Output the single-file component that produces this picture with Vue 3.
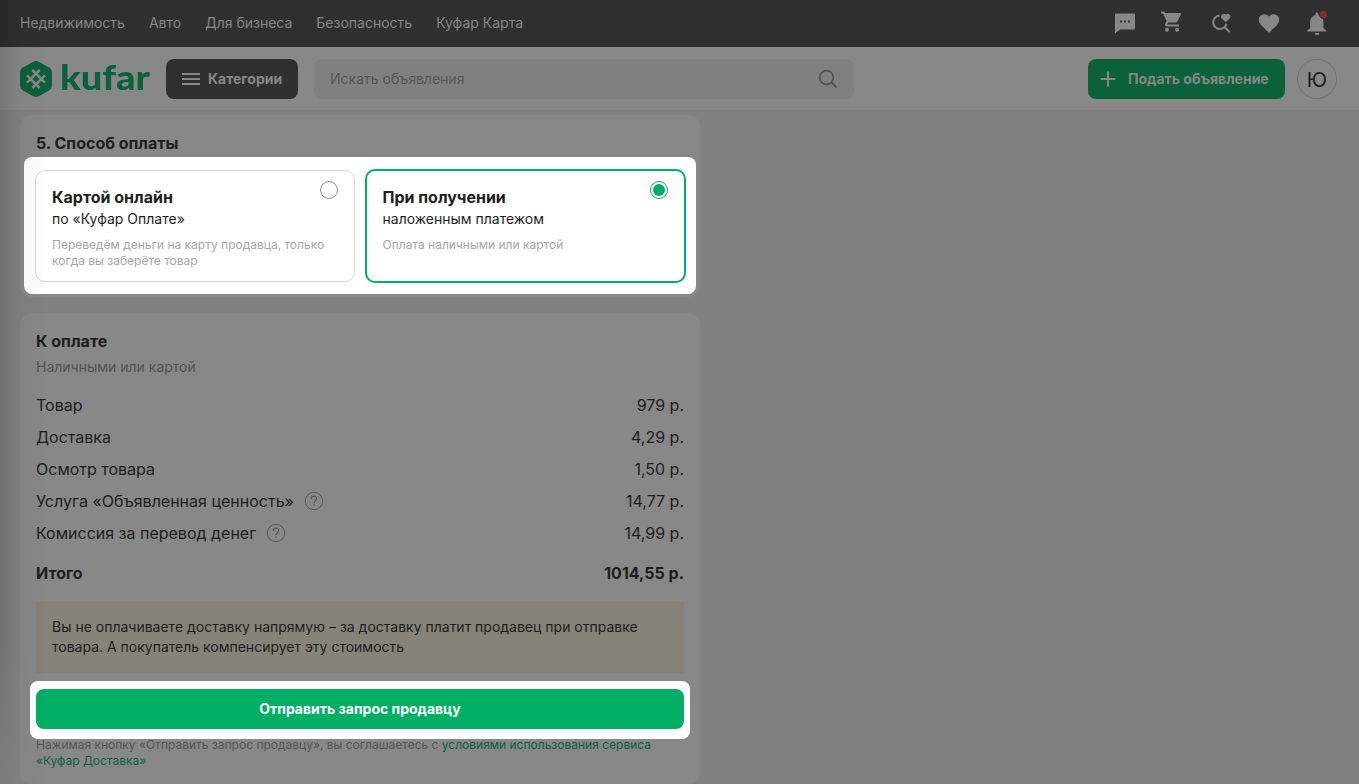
<script setup>
import { ref } from 'vue';

const navLinks = ['Недвижимость', 'Авто', 'Для бизнеса', 'Безопасность', 'Куфар Карта'];

const methods = [
  {
    id: 'online',
    title: 'Картой онлайн',
    subtitle: 'по «Куфар Оплате»',
    note: 'Переведём деньги на карту продавца, только когда вы заберёте товар',
  },
  {
    id: 'cod',
    title: 'При получении',
    subtitle: 'наложенным платежом',
    note: 'Оплата наличными или картой',
  },
];
const selected = ref('cod');

const rows = [
  { label: 'Товар', price: '979 р.' },
  { label: 'Доставка', price: '4,29 р.' },
  { label: 'Осмотр товара', price: '1,50 р.' },
  { label: 'Услуга «Объявленная ценность»', price: '14,77 р.', hint: true },
  { label: 'Комиссия за перевод денег', price: '14,99 р.', hint: true },
];
</script>

<template>
  <div class="page">
    <nav class="topbar">
      <div class="links">
        <a v-for="link in navLinks" :key="link">{{ link }}</a>
      </div>
      <div class="icons">
        <svg width="24" height="24" viewBox="0 0 24 24">
          <path fill="currentColor" fill-rule="evenodd" d="M3 2.500h18a1 1 0 0 1 1 1v14a1 1 0 0 1-1 1H7l-5 4v-19a1 1 0 0 1 1-1Zm4 7v2h2v-2H7Zm4 0v2h2v-2h-2Zm4 0v2h2v-2h-2Z" />
        </svg>
        <svg width="24" height="24" viewBox="0 0 24 24">
          <g fill="currentColor" transform="translate(-1 -.5)">
            <path d="M1 1v2h2l3.600 7.600-1.350 2.450C4.520 14.370 5.480 16 7 16h12v-2H7.420a.25.25 0 0 1-.22-.37L8.100 12h7.450c.75 0 1.410-.41 1.750-1.030L21 4a1 1 0 0 0-.87-1.500H5.210L4.270 1H1Z" />
            <circle cx="7" cy="19.300" r="2" />
            <circle cx="17" cy="19.300" r="2" />
          </g>
        </svg>
        <svg width="24" height="24" viewBox="0 0 24 24">
          <path fill="none" stroke="currentColor" stroke-width="2" d="M10.500 4.600a6.700 6.700 0 1 0 6.900 8.200M15.300 15.800l5.200 5.200" />
          <path fill="currentColor" d="m16.700 11.200-3.900-3.800a2.650 2.650 0 0 1 3.900-3.600 2.650 2.650 0 0 1 3.900 3.600l-3.900 3.800Z" />
        </svg>
        <svg width="24" height="24" viewBox="0 0 24 24">
          <path fill="currentColor" d="m12 21.700-1.450-1.320C5.400 15.710 1.800 12.630 1.800 8.850c0-3.080 2.500-5.500 5.600-5.500 1.840 0 3.510.81 4.600 2.090 1.090-1.280 2.760-2.090 4.600-2.090 3.080 0 5.600 2.420 5.600 5.500 0 3.780-3.600 6.860-8.750 11.540L12 21.700Z" />
        </svg>
        <span class="bell">
          <svg width="24" height="24" viewBox="0 0 24 24">
            <path fill="currentColor" d="M10.500 3.900V3a1.400 1.400 0 0 1 2.800 0v.9c3.200.8 5.100 3.500 5.100 6.800v6.200l2.900 2.600v1.100h-19v-1.100l2.900-2.600v-6.200c0-3.300 1.900-6 5.300-6.800ZM9.800 22.100h4.400a2.200 2.200 0 0 1-4.400 0Z" />
          </svg>
          <i class="dot"></i>
        </span>
      </div>
    </nav>

    <header class="header">
      <div class="logo">
        <svg width="32" height="36" viewBox="0 0 32 36">
          <path fill="currentColor" d="M13.200.8a6 6 0 0 1 5.600 0l10.200 5.700A6 6 0 0 1 32 11.700v12.600a6 6 0 0 1-3 5.200l-10.200 5.700a6 6 0 0 1-5.600 0L3 29.500a6 6 0 0 1-3-5.200V11.700a6 6 0 0 1 3-5.200Z" />
          <path stroke="#888" stroke-width="2.500" d="m12.300 9 12.700 12.700M19.700 9 7 21.700M7 14.300 19.700 27M25 14.300 12.300 27" />
        </svg>
        <span class="wordmark">kufar</span>
      </div>
      <button class="categories">
        <svg width="18" height="14" viewBox="0 0 18 14">
          <path stroke="currentColor" stroke-width="2" d="M0 2h18M0 7h18M0 12h18" />
        </svg>
        Категории
      </button>
      <div class="search">
        <span>Искать объявления</span>
        <svg width="20" height="20" viewBox="0 0 20 20">
          <circle cx="8.500" cy="8.500" r="6.800" fill="none" stroke="currentColor" stroke-width="1.800" />
          <path d="m13.300 13.300 5.200 5.200" stroke="currentColor" stroke-width="2" />
        </svg>
      </div>
      <button class="post">
        <svg width="16" height="16" viewBox="0 0 16 16">
          <path stroke="currentColor" stroke-width="2" d="M8 .5v15M.5 8h15" />
        </svg>
        Подать объявление
      </button>
      <div class="avatar">Ю</div>
    </header>

    <main class="content">
      <section class="card payment">
        <h2>5. Способ оплаты</h2>
        <div class="methods">
          <div
            v-for="method in methods"
            :key="method.id"
            class="method"
            :class="{ active: selected === method.id }"
            @click="selected = method.id"
          >
            <div class="method-text">
              <h3>{{ method.title }}</h3>
              <p class="subtitle">{{ method.subtitle }}</p>
              <p class="note">{{ method.note }}</p>
            </div>
            <span class="radio"></span>
          </div>
        </div>
      </section>

      <section class="card summary">
        <h2>К оплате</h2>
        <p class="pay-type">Наличными или картой</p>
        <div v-for="row in rows" :key="row.label" class="row">
          <span>{{ row.label }}</span>
          <svg v-if="row.hint" width="20" height="20" viewBox="0 0 20 20" fill="none" stroke="currentColor">
            <circle cx="10" cy="10" r="8.700" />
            <path stroke-width="1.200" d="M7.300 7.900c0-3.700 5.400-3.400 5.400-.4 0 2.200-2.700 2.300-2.700 4.600M10 13.300v1.400" />
          </svg>
          <span class="price">{{ row.price }}</span>
        </div>
        <div class="row total">
          <span>Итого</span>
          <span class="price">1014,55 р.</span>
        </div>
        <div class="notice">
          Вы не оплачиваете доставку напрямую – за доставку платит продавец при отправке товара. А покупатель компенсирует эту стоимость
        </div>
        <div class="submit-wrap">
          <button class="submit">Отправить запрос продавцу</button>
        </div>
        <p class="terms">
          Нажимая кнопку «Отправить запрос продавцу», вы соглашаетесь с <a>условиями использования сервиса «Куфар Доставка»</a>
        </p>
      </section>
    </main>
    <div class="edge-shade"></div>
  </div>
</template>

<style>
body {
  margin: 0;
  overflow: hidden;
}
</style>

<style scoped>
.page {
  position: relative;
  height: 784px;
  overflow: hidden;
  background: #828282;
  color: #1d1d1d;
  font-family: Inter, "Liberation Sans", sans-serif;
}
.page * {
  box-sizing: border-box;
}
h2, h3, p {
  margin: 0;
}
svg {
  display: block;
  flex-shrink: 0;
}
button {
  border: 0;
  font: inherit;
}
.topbar {
  display: flex;
  justify-content: space-between;
  align-items: center;
  height: 47px;
  padding: 0 30px 2px 20px;
  background: #2f2f2f;
  color: #888;
}
.links {
  display: flex;
  gap: 24px;
  font-size: 14px;
}
.icons {
  display: flex;
  gap: 24px;
}
.bell {
  position: relative;
}
.dot {
  position: absolute;
  top: 0;
  right: 2px;
  width: 7px;
  height: 7px;
  border-radius: 50%;
  background: #8b2b34;
  box-shadow: 0 0 0 1px #2f2f2f;
}
.header {
  display: flex;
  align-items: center;
  height: 64px;
  padding: 0 22px 0 20px;
  background: #888;
  border-bottom: 1px solid #7f7f7f;
}
.logo {
  display: flex;
  align-items: center;
  gap: 8px;
  width: 146px;
  color: #0a613b;
}
.wordmark {
  padding-bottom: 4px;
  font-family: Lato, sans-serif;
  font-weight: 900;
  font-size: 34px;
  line-height: 36px;
  transform: scaleX(1.12);
  transform-origin: left;
}
.categories {
  display: flex;
  align-items: center;
  gap: 8px;
  width: 132px;
  height: 40px;
  padding: 0 16px;
  border-radius: 8px;
  background: #2f2f2f;
  color: #888;
  font-size: 14px;
  font-weight: 700;
}
.search {
  display: flex;
  align-items: center;
  justify-content: space-between;
  width: 540px;
  height: 40px;
  margin-left: 16px;
  padding: 0 16px;
  border-radius: 8px;
  background: #808080;
  color: #545454;
  font-size: 14px;
}
.post {
  display: flex;
  align-items: center;
  gap: 12px;
  width: 197px;
  height: 40px;
  margin-left: auto;
  padding: 0 12px;
  border-radius: 8px;
  background: #0a613b;
  color: #888;
  font-size: 14px;
  font-weight: 700;
  white-space: nowrap;
}
.avatar {
  width: 40px;
  height: 40px;
  margin-left: 12px;
  border: 1px solid #747474;
  border-radius: 50%;
  font-size: 20px;
  line-height: 40px;
  text-align: center;
}
.content {
  width: 680px;
  margin: 4px 0 0 20px;
}
.card {
  background: #888;
  border-radius: 12px;
}
.card h2 {
  font-size: 16px;
  line-height: 24px;
  font-weight: 700;
}
.payment {
  height: 182px;
  padding: 16px 4px 3px;
}
.payment h2 {
  padding-left: 12px;
}
.methods {
  display: flex;
  align-items: center;
  gap: 10px;
  height: 137px;
  margin-top: 2px;
  padding: 0 10px 0 11px;
  background: #fff;
  border-radius: 8px;
}
.method {
  display: flex;
  flex-shrink: 0;
  justify-content: space-between;
  width: 319.5px;
  height: 112px;
  padding: 14px 16px;
  border: 1px solid #d8d8d8;
  border-radius: 10px;
}
.method.active {
  width: 321.5px;
  height: 114px;
  border: 2px solid #00af64;
}
.method-text {
  width: 280px;
  margin-right: -30px;
}
.method h3 {
  font-size: 16px;
  line-height: 24px;
}
.subtitle {
  font-size: 14px;
  line-height: 20px;
}
.note {
  margin-top: 8px;
  color: #a6a6a6;
  font-size: 12px;
  line-height: 16px;
}
.radio {
  flex-shrink: 0;
  width: 18px;
  height: 18px;
  margin-top: -4px;
  border: 1px solid #8f8f8f;
  border-radius: 50%;
}
.active .radio {
  padding: 2px;
  border-color: #00af64;
  background: #00af64 content-box;
}
.summary {
  height: 471px;
  margin-top: 16px;
  padding: 16px;
}
.pay-type {
  margin: 4px 0 12px;
  color: #515151;
  font-size: 14px;
  line-height: 20px;
}
.row {
  display: flex;
  align-items: center;
  height: 32px;
  font-size: 16px;
}
.row svg {
  margin-left: 10px;
  color: #54585c;
}
.price {
  margin-left: auto;
}
.total {
  margin-top: 8px;
  font-weight: 700;
}
.notice {
  height: 72px;
  margin-top: 12px;
  padding: 16px;
  background: #87837a;
  font-size: 14px;
  line-height: 20px;
}
.submit-wrap {
  height: 58px;
  margin: 8px -6px 0;
  padding: 8px 6px;
  border-radius: 8px;
  background: #fff;
}
.submit {
  display: block;
  width: 100%;
  height: 40px;
  padding: 0 0 1px;
  border-radius: 8px;
  background: #00af64;
  color: #fff;
  font-size: 14px;
  font-weight: 700;
}
.terms {
  margin-top: -2px;
  color: #555;
  font-size: 12px;
  line-height: 16px;
}
.terms a {
  color: #0a613b;
}
.edge-shade {
  position: absolute;
  top: 0;
  left: 0;
  width: 44px;
  height: 784px;
  background: linear-gradient(to right, rgba(0, 0, 0, 0.12), rgba(0, 0, 0, 0.03) 20px, rgba(0, 0, 0, 0.01));
  mask-image: linear-gradient(#000 640px, rgba(0, 0, 0, 0.35));
  pointer-events: none;
}
</style>
